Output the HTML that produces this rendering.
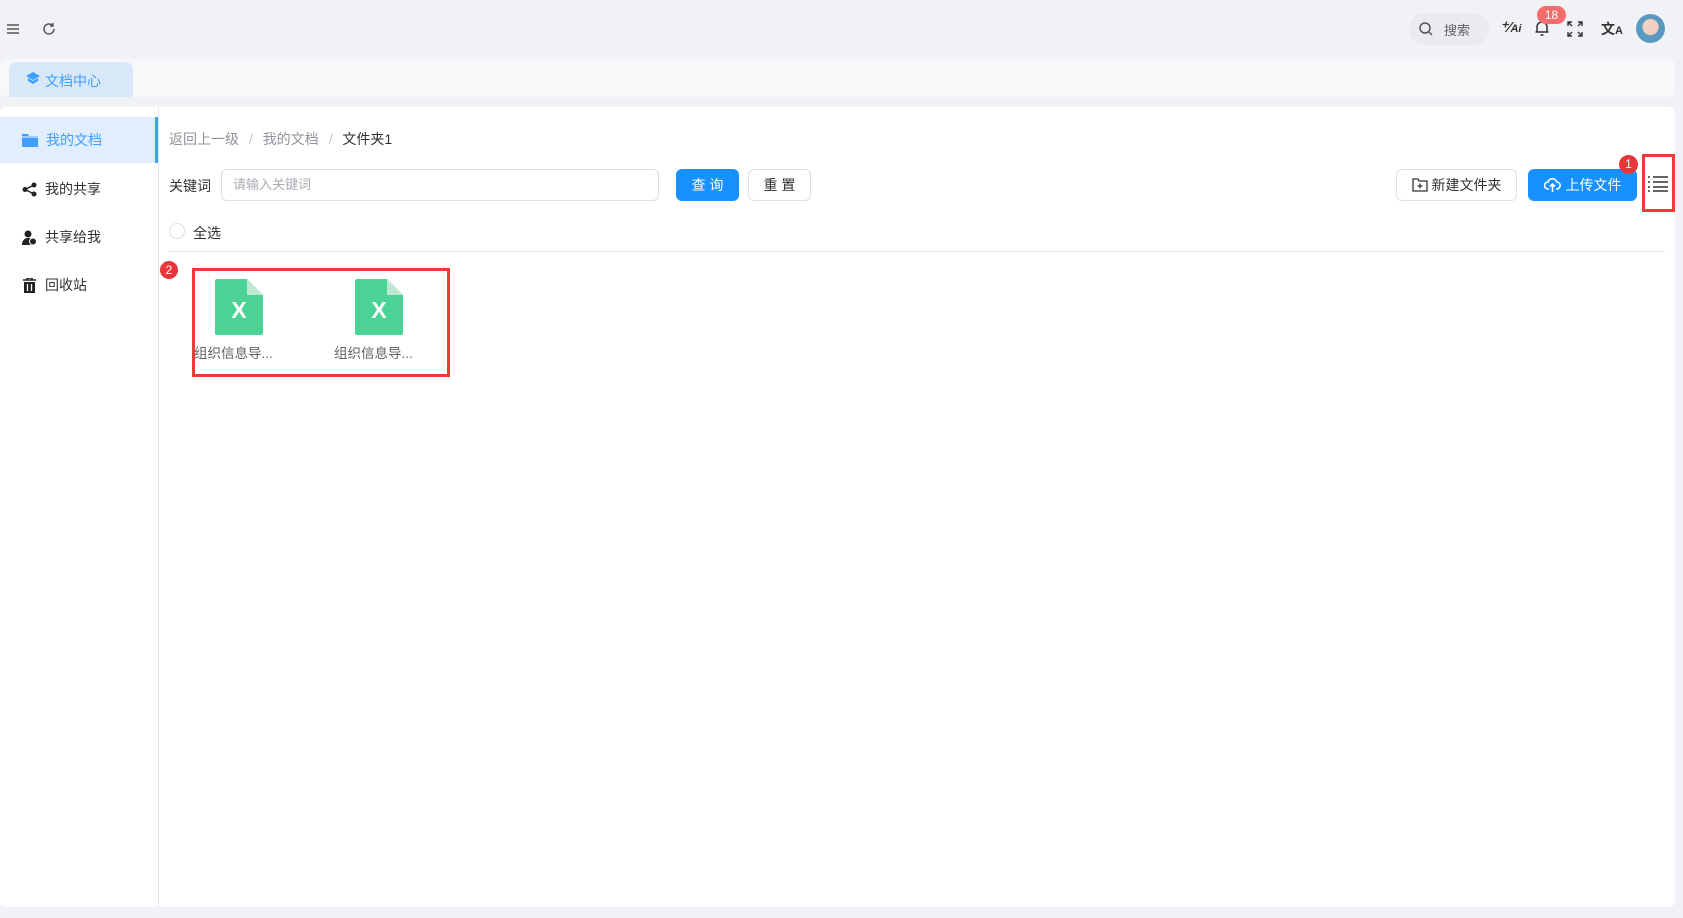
<!DOCTYPE html>
<html><head><meta charset="utf-8"><style>
*{box-sizing:border-box;margin:0;padding:0}
body{width:1683px;height:918px;background:#f0f2f5;font-family:"Liberation Sans","Noto Sans CJK SC",sans-serif;font-size:14px;color:#303133;position:relative;overflow:hidden}
.a{position:absolute}
.btn{position:absolute;height:32px;border-radius:6px;display:flex;align-items:center;justify-content:center;font-size:14px}
.nav{position:absolute;left:22px;display:flex;align-items:center;gap:8px;font-size:14px;color:#303133}
.file{position:absolute;width:48px;height:56px}
.flab{position:absolute;font-size:13.5px;color:#606266}
</style></head><body>
<svg class="a" style="left:6px;top:22px" width="14" height="14" viewBox="0 0 14 14"><path d="M1 3h12M1 7h12M1 11h12" stroke="#555" stroke-width="1.6"/></svg>
<svg class="a" style="left:41px;top:21px" width="16" height="16" viewBox="0 0 16 16" fill="none" stroke="#555" stroke-width="1.5"><path d="M13 8a5 5 0 1 1-1.5-3.6"/><path d="M12 2v3h-3"/></svg>
<div class="a" style="left:1409px;top:13px;width:80px;height:32px;border-radius:16px;background:#e9ebef"></div>
<svg class="a" style="left:1418px;top:21px" width="16" height="16" viewBox="0 0 16 16" fill="none" stroke="#555" stroke-width="1.5"><circle cx="7" cy="7" r="5"/><path d="M11 11l3 3"/></svg>
<div class="a" style="left:1444px;top:20px;font-size:13px;color:#606266">搜索</div>
<div class="a" style="left:1500px;top:18px;font-size:15px;font-weight:bold;color:#333;font-style:italic">⁺⁄<span style="font-size:11px">Ai</span></div>
<svg class="a" style="left:1533px;top:19px" width="18" height="18" viewBox="0 0 18 18" fill="none" stroke="#333" stroke-width="1.5"><path d="M4 13V8a5 5 0 0 1 10 0v5M2.5 13h13M7.5 16h3"/></svg>
<div class="a" style="left:1537px;top:6px;width:29px;height:18px;border-radius:9px;background:#f56c6c;color:#fff;font-size:12px;text-align:center;line-height:18px">18</div>
<svg class="a" style="left:1567px;top:21px" width="16" height="16" viewBox="0 0 16 16" fill="none" stroke="#333" stroke-width="1.4"><path d="M1 5V1h4M11 1h4v4M15 11v4h-4M5 15H1v-4M1 1l4 4M15 1l-4 4M15 15l-4-4M1 15l4-4"/></svg>
<div class="a" style="left:1601px;top:19px;font-size:14px;font-weight:bold;color:#333">文<span style="font-size:11px">A</span></div>
<div class="a" style="left:1636px;top:14px;width:29px;height:29px;border-radius:50%;background:radial-gradient(circle at 50% 45%,#f0d0c0 0 35%,#5a9ac0 40%)"></div>
<div class="a" style="left:0;top:59px;width:1675px;height:38px;background:#f7f8fa;border-radius:6px"></div>
<div class="a" style="left:9px;top:62px;width:124px;height:35px;background:#d8e8f8;border-radius:8px 8px 0 0"></div>
<svg class="a" style="left:26px;top:72px" width="14" height="13" viewBox="0 0 14 13"><path d="M7 0L14 4 7 8 0 4z" fill="#409eff"/><path d="M2 6v3l5 3 5-3V6L7 9z" fill="#409eff"/></svg>
<div class="a" style="left:45px;top:71px;color:#409eff;font-size:14px">文档中心</div>
<div class="a" style="left:0;top:107px;width:1675px;height:800px;background:#fff;border-radius:6px"></div>
<div class="a" style="left:158px;top:107px;width:1px;height:800px;background:#e4e7ed"></div>
<div class="a" style="left:0;top:117px;width:158px;height:46px;background:#e1eefd;border-right:3px solid #409eff"></div>
<div class="nav" style="top:130px;color:#409eff"><svg width="16" height="14" viewBox="0 0 16 14"><path d="M0 1h6l1 2h9v11H0z" fill="#409eff"/><path d="M0 4h16" stroke="#fff" stroke-width="1"/></svg><span>我的文档</span></div>
<div class="nav" style="top:179px"><svg width="15" height="15" viewBox="0 0 15 15"><circle cx="3" cy="7.5" r="2.5" fill="#222"/><circle cx="12" cy="3" r="2.5" fill="#222"/><circle cx="12" cy="12" r="2.5" fill="#222"/><path d="M3 7.5L12 3M3 7.5L12 12" stroke="#222" stroke-width="1.5"/></svg><span>我的共享</span></div>
<div class="nav" style="top:227px"><svg width="15" height="15" viewBox="0 0 15 15"><circle cx="6" cy="4" r="3.5" fill="#222"/><path d="M0 15c0-5 3-7 6-7s4 1 5 2v5z" fill="#222"/><circle cx="11" cy="11.5" r="3.5" fill="#222" stroke="#fff"/></svg><span>共享给我</span></div>
<div class="nav" style="top:275px"><svg width="15" height="15" viewBox="0 0 15 15"><path d="M1 2h13M5 2V0h5v2" stroke="#222" stroke-width="1.6" fill="none"/><path d="M2 4h11v11H2z" fill="#222"/><path d="M5.5 6v7M9.5 6v7" stroke="#fff" stroke-width="1.3"/></svg><span>回收站</span></div>
<div class="a" style="left:169px;top:129px;color:#909399">返回上一级 <span style="margin:0 6px;color:#c0c4cc">/</span> 我的文档 <span style="margin:0 6px;color:#c0c4cc">/</span> <span style="color:#303133">文件夹1</span></div>
<div class="a" style="left:169px;top:176px">关键词</div>
<div class="a" style="left:221px;top:169px;width:438px;height:32px;border:1px solid #dcdfe6;border-radius:6px;padding-left:11px;line-height:30px;color:#a8abb2;font-size:13px">请输入关键词</div>
<div class="btn" style="left:676px;top:169px;width:63px;background:#1890ff;color:#fff">查 询</div>
<div class="btn" style="left:748px;top:169px;width:63px;border:1px solid #dcdfe6;color:#303133">重 置</div>
<div class="btn" style="left:1396px;top:169px;width:121px;border:1px solid #dcdfe6;color:#303133;gap:4px"><svg width="16" height="14" viewBox="0 0 16 14" fill="none" stroke="#333" stroke-width="1.3"><path d="M1 1h5l1 2h8v10H1z"/><path d="M8 5.5v5M5.5 8h5"/></svg>新建文件夹</div>
<div class="btn" style="left:1528px;top:169px;width:109px;background:#1890ff;color:#fff;gap:5px"><svg width="17" height="14" viewBox="0 0 17 14" fill="none" stroke="#fff" stroke-width="1.6"><path d="M5 11H4a3.5 3.5 0 0 1 0-7 4.5 4.5 0 0 1 8.7 0 3.5 3.5 0 0 1 0 7H12"/><path d="M8.5 14V6M6 8.5l2.5-2.5L11 8.5"/></svg>上传文件</div>
<div class="a" style="left:1619px;top:155px;width:19px;height:19px;border-radius:50%;background:#e8363a;color:#fff;font-size:12px;text-align:center;line-height:19px">1</div>
<div class="a" style="left:1642px;top:154px;width:33px;height:58px;border:3px solid #f03a3a"></div>
<svg class="a" style="left:1648px;top:176px" width="20" height="16" viewBox="0 0 20 16" stroke="#333" stroke-width="1.5"><path d="M0 1h2M5 1h15M0 6h2M5 6h15M0 11h2M5 11h15M0 15h2M5 15h15"/></svg>
<div class="a" style="left:169px;top:223px;width:16px;height:16px;border:1px solid #dcdfe6;border-radius:50%"></div>
<div class="a" style="left:193px;top:223px">全选</div>
<div class="a" style="left:169px;top:251px;width:1496px;height:1px;background:#e4e7ed"></div>
<div class="a" style="left:159px;top:260px;width:20px;height:20px;border-radius:50%;background:#e8363a;color:#fff;font-size:12px;text-align:center;line-height:18px;border:1px solid #fff">2</div>
<div class="a" style="left:192px;top:268px;width:258px;height:109px;border:3px solid #f03a3a"></div>
<svg class="file" style="left:215px;top:279px" viewBox="0 0 48 56"><path d="M2 0h30l16 16v38a2 2 0 0 1-2 2H2a2 2 0 0 1-2-2V2a2 2 0 0 1 2-2z" fill="#4bd395"/><path d="M32 0l16 16H32z" fill="#bde9d3"/><text x="24" y="39" text-anchor="middle" font-family="Liberation Sans" font-weight="bold" font-size="23" fill="#fff">X</text></svg>
<div class="flab" style="left:194px;top:342px">组织信息导...</div>
<svg class="file" style="left:355px;top:279px" viewBox="0 0 48 56"><path d="M2 0h30l16 16v38a2 2 0 0 1-2 2H2a2 2 0 0 1-2-2V2a2 2 0 0 1 2-2z" fill="#4bd395"/><path d="M32 0l16 16H32z" fill="#bde9d3"/><text x="24" y="39" text-anchor="middle" font-family="Liberation Sans" font-weight="bold" font-size="23" fill="#fff">X</text></svg>
<div class="flab" style="left:334px;top:342px">组织信息导...</div>
</body></html>
